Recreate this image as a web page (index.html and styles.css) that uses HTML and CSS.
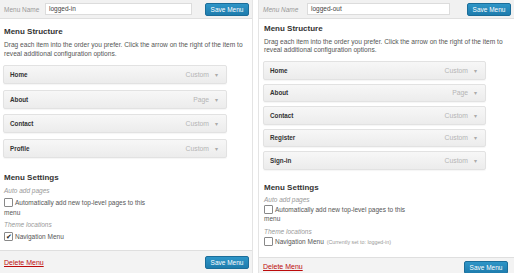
FILE: index.html
```html
<!DOCTYPE html>
<html lang="en">
<head>
  <meta charset="UTF-8" />
  <title>Menus</title>
  <link rel="stylesheet" href="styles.css">
</head>
<body>

  <div class="panel left">
    <div class="panel-head">
      <label class="name-label">Menu Name</label>
      <div class="name-input">logged-in</div>
      <span class="btn">Save Menu</span>
    </div>

    <div class="panel-body">
      <h3>Menu Structure</h3>
      <p class="desc">Drag each item into the order you prefer. Click the arrow on the right of the item to reveal additional configuration options.</p>

      <ul class="items">
        <li><b>Home</b><span class="type">Custom</span><span class="caret">&#9662;</span></li>
        <li><b>About</b><span class="type">Page</span><span class="caret">&#9662;</span></li>
        <li><b>Contact</b><span class="type">Custom</span><span class="caret">&#9662;</span></li>
        <li><b>Profile</b><span class="type">Custom</span><span class="caret">&#9662;</span></li>
      </ul>

      <h3 class="settings-title">Menu Settings</h3>
      <div class="settings">
        <div class="hint">Auto add pages</div>
        <div class="check-row"><span class="box"></span>Automatically add new top-level pages to this</div>
        <div class="wrap">menu</div>
        <div class="hint">Theme locations</div>
        <div class="check-row"><span class="box checked">&#10004;</span>Navigation Menu</div>
      </div>
    </div>

    <div class="panel-foot">
      <a class="delete" href="#">Delete Menu</a>
      <span class="btn">Save Menu</span>
    </div>
  </div>

  <div class="panel right">
    <div class="panel-head">
      <label class="name-label">Menu Name</label>
      <div class="name-input">logged-out</div>
      <span class="btn">Save Menu</span>
    </div>

    <div class="panel-body">
      <h3>Menu Structure</h3>
      <p class="desc">Drag each item into the order you prefer. Click the arrow on the right of the item to reveal additional configuration options.</p>

      <ul class="items">
        <li><b>Home</b><span class="type">Custom</span><span class="caret">&#9662;</span></li>
        <li><b>About</b><span class="type">Page</span><span class="caret">&#9662;</span></li>
        <li><b>Contact</b><span class="type">Custom</span><span class="caret">&#9662;</span></li>
        <li><b>Register</b><span class="type">Custom</span><span class="caret">&#9662;</span></li>
        <li><b>Sign-in</b><span class="type">Custom</span><span class="caret">&#9662;</span></li>
      </ul>

      <h3 class="settings-title">Menu Settings</h3>
      <div class="settings">
        <div class="hint">Auto add pages</div>
        <div class="check-row"><span class="box"></span>Automatically add new top-level pages to this</div>
        <div class="wrap">menu</div>
        <div class="hint">Theme locations</div>
        <div class="check-row"><span class="box"></span>Navigation Menu <small>(Currently set to: logged-in)</small></div>
      </div>
    </div>

    <div class="panel-foot">
      <a class="delete" href="#">Delete Menu</a>
      <span class="btn">Save Menu</span>
    </div>
  </div>

</body>
</html>
```

FILE: styles.css
```css
* {
  margin: 0;
  padding: 0;
  box-sizing: border-box;
}

body {
  font-family: 'Liberation Sans', Arial, sans-serif;
  background: #fff;
  color: #333;
  display: flex;
  gap: 5px;
  width: 514px;
  height: 273px;
  overflow: hidden;
}

.panel {
  display: flex;
  flex-direction: column;
  height: 273px;
  background: #fff;
}

.panel.left {
  width: 253px;
  border-right: 1px solid #e4e4e4;
}

.panel.right {
  width: 256px;
  border-left: 1px solid #e4e4e4;
}

.panel-head {
  display: flex;
  align-items: center;
  flex-shrink: 0;
  height: 19px;
  padding: 0 3px 0 4px;
  background: #f1f1f1;
  border-bottom: 1px solid #dfdfdf;
}

.name-label {
  font-size: 6.5px;
  color: #999;
  width: 41px;
}

.right .name-label {
  font-style: italic;
  width: 44px;
}

.name-input {
  width: 147px;
  height: 12px;
  background: #fff;
  border: 1px solid #dcdcdc;
  font-size: 6.5px;
  line-height: 10px;
  padding-left: 3px;
  color: #444;
}

.right .name-input {
  width: 143px;
}

.btn {
  margin-left: auto;
  width: 44px;
  height: 13px;
  background: linear-gradient(#2e95c7, #1e7cad);
  border: 1px solid #1b6d99;
  border-radius: 2px;
  color: #fff;
  font-size: 6.5px;
  line-height: 11px;
  text-align: center;
}

.panel-body {
  flex: 1;
  min-height: 0;
  overflow: hidden;
  padding: 8px 4px 0 4px;
}

.right .panel-body {
  padding: 5px 4px 0 5px;
}

h3 {
  font-size: 8px;
  font-weight: bold;
  color: #333;
  line-height: 10px;
}

.desc {
  font-size: 6.6px;
  line-height: 8.5px;
  color: #555;
  margin-top: 4px;
}

.right .desc {
  line-height: 7.5px;
}

.items {
  list-style: none;
  margin-top: 7px;
  width: 224px;
  margin-left: -1px;
}

.right .items {
  width: 223px;
  margin-top: 8px;
}

.items li {
  display: flex;
  align-items: center;
  height: 19px;
  margin-bottom: 5.5px;
  padding: 0 8px 0 6px;
  background: linear-gradient(#f7f7f7, #ececec);
  border: 1px solid #e2e2e2;
  border-radius: 2px;
  box-shadow: 0 1px 1px rgba(0, 0, 0, 0.04);
}

.right .items li {
  height: 18.5px;
  margin-bottom: 4px;
}

.items b {
  font-size: 6.3px;
  color: #333;
  flex: 1;
}

.type {
  font-size: 6.8px;
  color: #b5b5b5;
}

.caret {
  font-size: 6px;
  color: #aaa;
  margin-left: 6px;
}

.settings-title {
  margin-top: 15px;
}

.right .settings-title {
  margin-top: 13px;
}

.settings {
  font-size: 6.5px;
  color: #555;
}

.hint {
  font-style: italic;
  color: #999;
  margin-top: 3.5px;
  line-height: 9px;
}

.right .hint {
  line-height: 8px;
  margin-top: 3px;
}

.check-row {
  display: flex;
  align-items: center;
  line-height: 10px;
  margin-top: 2.5px;
}

.right .check-row {
  margin-top: 1px;
}

.check-row small {
  font-size: 5.3px;
  color: #999;
  margin-left: 3px;
}

.box {
  width: 9px;
  height: 9px;
  border: 1px solid #888;
  background: #fff;
  margin-right: 2px;
  border-radius: 1px;
  font-size: 7px;
  line-height: 7px;
  text-align: center;
  color: #222;
}

.wrap {
  line-height: 9px;
  margin-bottom: 1px;
}

.right .wrap {
  line-height: 7px;
  margin-bottom: 6px;
}

.panel-foot {
  display: flex;
  align-items: center;
  flex-shrink: 0;
  height: 23px;
  padding: 0 3px 0 4px;
  background: #f3f3f3;
  border-top: 1px solid #dfdfdf;
}

.right .panel-foot {
  height: 16px;
  padding: 3px 6px 0 4px;
  align-items: flex-start;
}

.delete {
  color: #bc0b0b;
  font-size: 7px;
  text-decoration: underline;
}

.right .delete {
  margin-top: 2px;
}
```
